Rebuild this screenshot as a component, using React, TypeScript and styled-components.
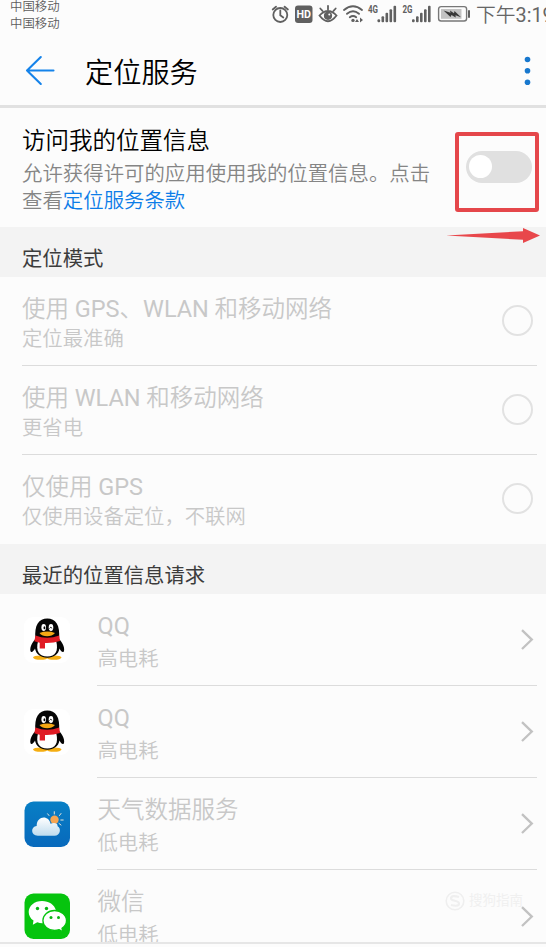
import React from "react";
import styled, { createGlobalStyle } from "styled-components";

const GlobalStyle = createGlobalStyle`
  html, body { margin: 0; padding: 0; background: #fcfcfc; }
  body {
    font-family: Roboto, "Noto Sans CJK SC", sans-serif;
    font-weight: 350;
    overflow: hidden;
  }
  svg { display: block; flex: none; }
`;

const Screen = styled.main`
  position: relative;
  display: flex;
  flex-direction: column;
  width: 546px;
  height: 947px;
  overflow: hidden;
  background: #fcfcfc;
`;

const StatusBar = styled.div`
  display: flex;
  justify-content: space-between;
  height: 36px;
  flex: none;
  color: #5c5c5c;
`;

const Carriers = styled.div`
  padding: 0 0 0 10px;
  margin-top: -2px;
  font-size: 12.4px;
  line-height: 17.2px;
  white-space: nowrap;
`;

const StatusIcons = styled.div`
  display: flex;
  width: 275px;
  height: 32px;
  overflow: hidden;
`;

const Clock = styled.span`
  margin-left: 5px;
  font-size: 19.8px;
  line-height: 31px;
  white-space: nowrap;
  color: #666;
`;

const Latin = styled.span`
  font-weight: 400;
`;

const Header = styled.header`
  display: flex;
  align-items: center;
  flex: none;
  height: 69px;
  padding: 0 13px 0 25px;
  border-bottom: 3px solid #e1e1e1;
`;

const Title = styled.h1`
  flex: 1;
  margin: 6px 0 0 30px;
  font-size: 28.2px;
  line-height: 40px;
  font-weight: 350;
  color: #000;
`;

const Access = styled.section`
  display: flex;
  justify-content: space-between;
  flex: none;
  height: 119px;
  box-sizing: border-box;
  padding: 17px 7px 0 22px;
`;

const AccessTitle = styled.h2`
  margin: 1px 0 5px;
  font-size: 23.5px;
  line-height: 30px;
  font-weight: 350;
  color: #000;
`;

const AccessText = styled.p`
  margin: 0;
  width: 412px;
  font-size: 20.42px;
  line-height: 27px;
  color: #858585;
  white-space: nowrap;
`;

const Link = styled.a`
  color: #0c7de8;
`;

const Highlight = styled.div`
  display: flex;
  justify-content: flex-end;
  box-sizing: border-box;
  width: 84px;
  height: 80px;
  margin-top: 7px;
  padding: 15px 3px 0 0;
  border: 4px solid #e5474b;
  border-radius: 3px;
`;

const Toggle = styled.div`
  box-sizing: border-box;
  width: 66px;
  height: 32px;
  padding: 4px 3px;
  border-radius: 16px;
  background: #e0e0e0;
`;

const Knob = styled.div`
  width: 23px;
  height: 23px;
  border-radius: 50%;
  background: #fff;
`;

const SectionTitle = styled.h3`
  flex: none;
  margin: 0;
  height: 49.5px;
  box-sizing: border-box;
  padding: 7px 0 0 22px;
  background: #f3f3f3;
  color: #3c3c3c;
  font-size: 20.35px;
  line-height: 50px;
  font-weight: 400;
`;

const Option = styled.div<{ $last?: boolean }>`
  display: flex;
  align-items: center;
  justify-content: space-between;
  flex: none;
  box-sizing: border-box;
  height: ${(p) => (p.$last ? 89.5 : 89)}px;
  margin: 0 9px 0 22px;
  padding-right: 4px;
  border-bottom: 1px solid ${(p) => (p.$last ? "transparent" : "#dcdcdc")};
`;

const Labels = styled.div`
  padding-top: 4px;
`;

const Name = styled.div`
  font-size: 23.5px;
  line-height: 32px;
  color: #c8c8c8;
  white-space: nowrap;
`;

const Note = styled.div<{ $gap?: number }>`
  margin-top: ${(p) => p.$gap ?? 0}px;
  font-size: 20.35px;
  line-height: 28px;
  color: #c8c8c8;
  white-space: nowrap;
`;

const Radio = styled.div`
  box-sizing: border-box;
  width: 31px;
  height: 31px;
  border: 2px solid #e2e2e2;
  border-radius: 50%;
`;

const AppRow = styled.div`
  display: flex;
  flex: none;
  height: 92.2px;
  padding: 0 9px 0 24px;
`;

const AppIcon = styled.div`
  display: flex;
  align-items: center;
  width: 73px;
`;

const AppBody = styled.div<{ $last?: boolean }>`
  display: flex;
  align-items: center;
  justify-content: space-between;
  flex: 1;
  box-sizing: border-box;
  padding: 0 3px 0 0.5px;
  border-bottom: 1px solid ${(p) => (p.$last ? "transparent" : "#dcdcdc")};
`;

const Arrow = styled.svg`
  position: absolute;
  left: 444px;
  top: 226px;
`;

const BottomEdge = styled.div`
  position: absolute;
  left: 0;
  right: 0;
  top: 942px;
  height: 5px;
  box-sizing: border-box;
  border-top: 2px solid #e6e6e6;
  background: #fcfcfc;
`;

const Watermark = styled.div`
  position: absolute;
  left: 445px;
  top: 889px;
  display: flex;
  gap: 4px;
  color: #f0f0f0;
`;

const WatermarkName = styled.div`
  font-size: 13.5px;
  line-height: 23px;
  font-weight: 400;
`;

function Signal({ x, label }: { x: number; label: string }) {
  return (
    <g>
      <text x={x} y="13" fontSize="10" fontWeight="700" textLength="10" lengthAdjust="spacingAndGlyphs" fill="#606060">
        {label}
      </text>
      {[3, 6, 9.5, 13, 16.5].map((h, i) => (
        <rect key={i} x={x + 9.5 + i * 4} y={22.3 - h} width="2.6" height={h} rx="1" />
      ))}
    </g>
  );
}

function SystemIcons() {
  return (
    <svg width="200" height="30" viewBox="271 0 200 30" fill="#606060">
      <g fill="none" stroke="#606060" strokeWidth="1.8" strokeLinecap="round">
        <circle cx="280.3" cy="15" r="7" />
        <path d="M280.3 10.5V15.3L283.3 17.5M272.7 9.5L276 6.7M287.9 9.5L284.6 6.7" />
      </g>
      <rect x="295" y="5.5" width="17.5" height="17.5" rx="3" />
      <text x="296.5" y="18.4" fontSize="11" fontWeight="700" textLength="14.5" lengthAdjust="spacingAndGlyphs" fill="#fff">HD</text>
      <g fill="none" stroke="#606060" strokeWidth="1.8" strokeLinecap="round">
        <path d="M319.5 15.5Q328 6.5 336.5 15.5Q328 27 319.5 15.5ZM328 9.5V5.8M322.5 10.8L320.3 8.5M333.5 10.8L335.7 8.5" />
      </g>
      <circle cx="328" cy="15.8" r="4.1" />
      <circle cx="329.3" cy="14.6" r="1" fill="#fcfcfc" />
      <g fill="none" stroke="#606060" strokeWidth="1.9" strokeLinecap="round">
        <path d="M344 10Q353 2.5 362 10M347 13.8Q353 8.8 359 13.8M349.8 17.2Q353 14.8 356.2 17.2" />
      </g>
      <circle cx="353" cy="20.4" r="1.7" />
      <path d="M357 19L359 22H355ZM360 17.5L363 20L360 22.5Z" />
      <Signal x={368} label="4G" />
      <Signal x={402.5} label="2G" />
      <rect x="438.6" y="6.6" width="28" height="14.4" rx="2.5" fill="none" stroke="#777" strokeWidth="1.4" />
      <rect x="441" y="9" width="20.5" height="9.8" fill="#c3c3c3" />
      <path d="M443.5 10.5L450.5 12.7L450 10.5L454 13.2L454.5 11L461 17.2L455.5 15.3L455.7 17.5L451.5 15L450.5 17Z" fill="#383838" />
      <rect x="468" y="10" width="2" height="8" rx="1" />
    </svg>
  );
}

function BackIcon() {
  return (
    <svg width="30" height="32" viewBox="0 0 30 32" fill="none" stroke="#1583ea" strokeWidth="2.1" strokeLinecap="round" strokeLinejoin="round">
      <path d="M28.5 15.5H2M15.8 2L2 15.5L15.8 29" />
    </svg>
  );
}

function MoreIcon() {
  return (
    <svg width="12" height="30" viewBox="0 0 12 30" fill="#1878ce">
      <circle cx="6.5" cy="3.5" r="2.8" />
      <circle cx="6.5" cy="14.8" r="2.8" />
      <circle cx="6.5" cy="26.2" r="2.8" />
    </svg>
  );
}

function Chevron() {
  return (
    <svg width="14" height="22" viewBox="0 0 14 22" fill="none" stroke="#c2c2c2" strokeWidth="2.3">
      <path d="M2 2.2L11.8 11.6L2 21" />
    </svg>
  );
}

function QQIcon() {
  return (
    <svg width="46" height="46" viewBox="0 0 46 46">
      <rect width="46" height="46" rx="9" fill="#fff" />
      <ellipse cx="16.5" cy="40.6" rx="7.5" ry="2.2" fill="#f5ae12" />
      <ellipse cx="30" cy="40.6" rx="7.5" ry="2.2" fill="#f5ae12" />
      <path d="M11.5 22C7.5 26 5.2 32 6.8 34.8C8 36 10.2 33.2 11 31.5C12 37.5 17 40.7 23.3 40.7C29.6 40.7 34.5 37.5 35.5 31.5C36.5 33.5 38.5 36 39.7 34.7C41.3 32 39 26 35 22C36.5 8 31.5 1.5 23.3 1.5C15 1.5 10 8 11.5 22Z" fill="#050505" />
      <path d="M14 24.5C11.5 34 15 39.5 23.3 39.5C31.6 39.5 34.5 34 32.3 24.5Z" fill="#fff" />
      <path d="M11.5 18.5Q23 23 35.2 18.5L36 24Q29 26.3 21 26V31.5H15.7V25.8L10.3 24.3Z" fill="#e01b24" />
      <ellipse cx="19.7" cy="10.5" rx="2.3" ry="3.4" fill="#fff" />
      <ellipse cx="27" cy="10.5" rx="2.3" ry="3.4" fill="#fff" />
      <ellipse cx="20.4" cy="10.8" rx=".9" ry="1.5" />
      <path d="M25.5 11.5Q26.8 8.8 28.2 11.5" fill="none" stroke="#111" strokeWidth=".9" />
      <path d="M15.5 16Q23.2 13.2 31 16Q28 19.3 23.2 19.3Q18 19.3 15.5 16Z" fill="#f5a814" />
    </svg>
  );
}

function WeatherIcon() {
  return (
    <svg width="46" height="46" viewBox="0 0 46 46">
      <defs>
        <linearGradient id="sky" x1="0" y1="0" x2="0" y2="1">
          <stop offset="0" stopColor="#087fc5" />
          <stop offset="1" stopColor="#0869bc" />
        </linearGradient>
        <linearGradient id="cloud" x1="0" y1="0" x2="0" y2="1">
          <stop offset="0" stopColor="#fff" />
          <stop offset="1" stopColor="#bfdcee" />
        </linearGradient>
      </defs>
      <rect x=".5" y=".5" width="45.5" height="45.5" rx="9" fill="url(#sky)" />
      <g stroke="#e8e5d9" strokeWidth="1" strokeLinecap="round">
        <path d="M30.3 13V10.7M25 14.5L23.6 12.8M35.5 14.5L37 12.5M36.8 19H39.2M35 22.5L37 24" />
      </g>
      <circle cx="30.5" cy="18.8" r="4.2" fill="#f6a653" />
      <path d="M13.8 34.7C6.5 34.7 6.5 25.5 12.7 25C12.5 14.5 25 13.5 26.5 22.8C29 21.7 34 21.5 33.6 25.2C37.500 27 36.500 34.700 30.500 34.700Z" fill="url(#cloud)" />
    </svg>
  );
}

function WeChatIcon() {
  return (
    <svg width="46" height="46" viewBox="0 0 46 46">
      <rect x=".5" y=".5" width="45.5" height="45.5" rx="9" fill="#06c40e" />
      <path d="M18 8C10.5 8 4.7 12.8 4.7 19C4.7 22.5 6.5 25.6 9.5 27.6L8.8 31.7L13.3 29.2Q18 31 22 29.5L32 17.5C30.5 11.8 25 8 18 8Z" fill="#fff" />
      <path d="M30.5 17.5C24 17.5 18.9 22 18.9 27.5C18.9 33.1 24 37.5 30.5 37.5Q33 37.5 35.2 36.7L38.8 38.7L38 35.3C40.8 33.5 42.5 30.7 42.5 27.5C42.5 22 37.1 17.5 30.5 17.5Z" fill="#fff" stroke="#06c40e" strokeWidth="1.3" />
      <g fill="#08b513">
        <circle cx="13.5" cy="15.5" r="1.7" />
        <circle cx="22.5" cy="15.5" r="1.7" />
        <circle cx="27" cy="24.5" r="1.5" />
        <circle cx="34.5" cy="24.5" r="1.5" />
      </g>
    </svg>
  );
}

/* Latin words are set one step heavier than the Chinese text beside them. */
function MixedText({ text }: { text: string }) {
  return (
    <>
      {text.split(/([A-Za-z0-9:]+)/).map((part, i) =>
        i % 2 ? <Latin key={i}>{part}</Latin> : part
      )}
    </>
  );
}

const options = [
  { name: "使用 GPS、WLAN 和移动网络", note: "定位最准确" },
  { name: "使用 WLAN 和移动网络", note: "更省电" },
  { name: "仅使用 GPS", note: "仅使用设备定位，不联网" },
];

const apps = [
  { name: "QQ", note: "高电耗", Icon: QQIcon },
  { name: "QQ", note: "高电耗", Icon: QQIcon },
  { name: "天气数据服务", note: "低电耗", Icon: WeatherIcon },
  { name: "微信", note: "低电耗", Icon: WeChatIcon },
];

export default function App() {
  return (
    <Screen lang="zh-CN">
      <GlobalStyle />
      <StatusBar>
        <Carriers>
          <div>中国移动</div>
          <div>中国移动</div>
        </Carriers>
        <StatusIcons>
          <SystemIcons />
          <Clock>
            <MixedText text="下午3:19" />
          </Clock>
        </StatusIcons>
      </StatusBar>
      <Header>
        <BackIcon />
        <Title>定位服务</Title>
        <MoreIcon />
      </Header>
      <Access>
        <div>
          <AccessTitle>访问我的位置信息</AccessTitle>
          <AccessText>
            允许获得许可的应用使用我的位置信息。点击
            <br />
            查看<Link>定位服务条款</Link>
          </AccessText>
        </div>
        <Highlight>
          <Toggle>
            <Knob />
          </Toggle>
        </Highlight>
      </Access>
      <SectionTitle>定位模式</SectionTitle>
      {options.map((o, i) => (
        <Option key={o.name} $last={i === options.length - 1}>
          <Labels>
            <Name>
              <MixedText text={o.name} />
            </Name>
            <Note>{o.note}</Note>
          </Labels>
          <Radio />
        </Option>
      ))}
      <SectionTitle>最近的位置信息请求</SectionTitle>
      {apps.map(({ name, note, Icon }, i) => (
        <AppRow key={i}>
          <AppIcon>
            <Icon />
          </AppIcon>
          <AppBody $last={i === apps.length - 1}>
            <Labels>
              <Name>
                <MixedText text={name} />
              </Name>
              <Note $gap={3}>{note}</Note>
            </Labels>
            <Chevron />
          </AppBody>
        </AppRow>
      ))}
      <Watermark>
        <svg width="20" height="24" viewBox="0 0 20 24" fill="none" stroke="#efefef" strokeWidth="1.6">
          <circle cx="10" cy="12" r="8.8" />
          <path d="M14 8Q6 5.5 6 9.5C6 12.5 14 11 14 14.5Q14 18 6 16" strokeWidth="2.2" />
        </svg>
        <WatermarkName>搜狗指南</WatermarkName>
      </Watermark>
      <Arrow width="98" height="20" viewBox="0 0 98 20">
        <path d="M2 9.5L79 5.3V2L96 9.5L79 17V13.7Z" fill="#e8474b" />
      </Arrow>
      <BottomEdge />
    </Screen>
  );
}
